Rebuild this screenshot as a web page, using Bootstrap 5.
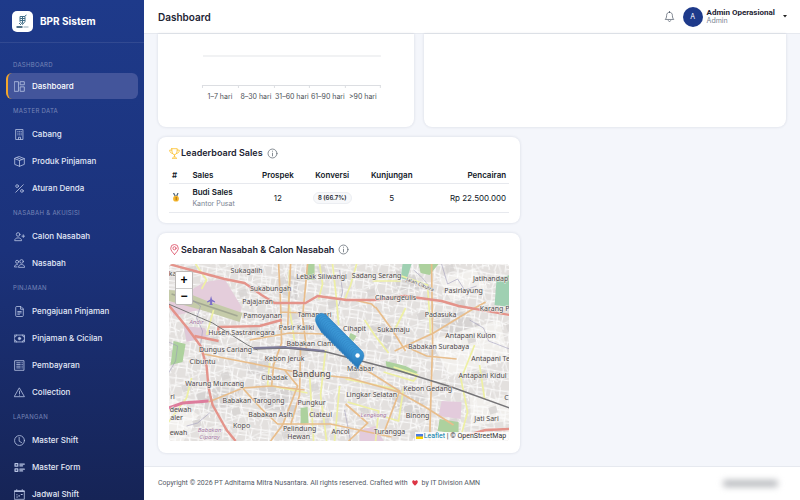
<!DOCTYPE html>
<html lang="id">
<head>
<meta charset="utf-8">
<meta name="viewport" content="width=device-width, initial-scale=1">
<title>Dashboard - BPR Sistem</title>
<link rel="stylesheet" href="https://cdn.jsdelivr.net/npm/bootstrap@5.3.0/dist/css/bootstrap.min.css">
<style>
body{font-family:Inter,"Open Sans",sans-serif;font-size:8px;line-height:12px;background:#f4f6fb;color:#1d2433}
svg{display:block;flex:none}
.ico{width:11px;height:11px;fill:none;stroke:currentColor;stroke-width:1.2;stroke-linecap:round;stroke-linejoin:round}
.sidebar{width:144px;flex:none;background:linear-gradient(180deg,#1e3a8a 0%,#1b327b 50%,#162456 100%)}
.brand{height:43px;padding:0 12px;gap:7px;color:#fff;font-size:10px;font-weight:700;border-bottom:1px solid rgba(255,255,255,.09)}
.brand:hover{color:#fff}
.logo{width:21px;height:21px;border-radius:5px;background:#fff}
.menu{padding:14px 6px 0}
.menu-title{height:21px;padding:6px 7px 0;font-size:6px;line-height:10px;letter-spacing:.3px;color:#7786b7}
.menu-title:first-child{height:16px;padding-top:3px}
.menu .nav-link{height:26px;margin-bottom:1px;padding:0 7px 0 6px;gap:7px;color:#e3e9f7;font-weight:500;border-radius:6px;border-left:2px solid transparent}
.menu .nav-link svg{color:#b6c2e2}
.menu .nav-link.active{background:#43559b;color:#fff;border-left-color:#f4a62a}
.topbar{height:34px;padding:0 13px 0 14px;background:#fff;border-bottom:1px solid #e6e9ef}
.topbar h1{font-size:10px;line-height:14px;font-weight:600;color:#1d2433}
.tool{border:0;background:none;padding:0;color:#4b5563}
.avatar{width:20px;height:20px;border-radius:50%;background:#1e3a8a;color:#fff;font-size:7px}
.user b{font-family:Roboto,Inter,sans-serif;font-weight:700;font-size:8px;line-height:9px;color:#1d2433}
.user small{font-size:7px;line-height:8px;color:#7b8492}
.content{padding:0 14px 13px}
.content .row{--bs-gutter-x:10px;--bs-gutter-y:0}
.panel{background:#fff;border:0;border-radius:8px;box-shadow:0 0 3px rgba(30,41,75,.14);margin-bottom:10px;padding:0 11px}
.panel-top{height:93px;border-radius:0 0 8px 8px}
.chart{display:block;width:100%;height:93px}
.chart text{font-size:7px;fill:#4b4f56;text-anchor:middle}
.panel h2{font-size:9px;line-height:12px;font-weight:600;margin:0;color:#1d2433}
.head{gap:1px}
.head h2{margin-right:3px}
.board{padding-top:10px;padding-bottom:10px}
.board table{table-layout:fixed;color:#111827;margin:8px 0 0;--bs-table-bg:transparent}
.board th,.board td{padding:0 3px;vertical-align:middle;border-color:#e7e9ee}
.board th{height:16px;font-weight:600;line-height:12px}
.board td{height:29px}
.c1{width:6%}.c2{width:18%}.c3{width:16%}.c4{width:16%}.c5{width:19%}.c6{width:25%}
.kantor{font-size:7px;color:#7b8492}
.pill{font-size:6px;line-height:8px;font-weight:600;padding:1px 4px;border:1px solid #eceef2;background:#f7f8fa;color:#22262e}
.spread{padding-top:11px;padding-bottom:12px;margin-bottom:0}
.map{height:177px;margin-top:8px;overflow:hidden;border-radius:4px;background:#e3e0dd}
.map>svg{width:100%;height:100%}
.map .labels{font-family:"Noto Sans",sans-serif;font-size:7px;fill:#4d4a4b;text-anchor:middle;paint-order:stroke;stroke:#f3f0ee;stroke-width:1px;stroke-linejoin:round}
.zoomer{left:6px;top:7px;border:1px solid #bdbab8;border-radius:2px;overflow:hidden}
.zoomer button{width:16px;height:16px;border:0;background:#fff;color:#000;font:bold 12px/14px "Liberation Sans",sans-serif;padding:0}
.zoomer button+button{border-top:1px solid #ccc}
.credit{right:0;bottom:0;gap:1px;background:rgba(255,255,255,.8);padding:0 3px 0 1px;font-family:Roboto,Inter,sans-serif;font-size:7px;line-height:9px;color:#333}
.credit a{color:#0078a8;text-decoration:none}
.footer{padding:0 14px;background:#fff;border-top:1px solid #e6e9ef;font-family:Roboto,Inter,sans-serif;font-size:7px;color:#555b66}
.haze{width:55px;height:7px;border-radius:3px;background:#b9bbbf;filter:blur(3px);margin-right:8px}
</style>
<script src="https://cdn.jsdelivr.net/npm/bootstrap@5.3.0/dist/js/bootstrap.bundle.min.js"></script>
</head>
<body>
<div class="d-flex vh-100 overflow-hidden">
<aside class="sidebar overflow-hidden">
  <a href="#" class="brand d-flex align-items-center text-decoration-none">
    <span class="logo d-flex align-items-center justify-content-center"><svg width="15" height="17" viewBox="0 0 15 17"><g fill="none" stroke="#426f88" stroke-width="1"><path d="M5 3.500h5v5l-2.500 3-2.500-3zM5 5.500h5M5 7.500h5M7.500 3.500v7M10 3l1.500-1M4 10l2 2"/></g><path d="M1.500 14h6" stroke="#17425f" stroke-width="1.500"/><path d="M8.500 14h5" stroke="#8fa8b5"/></svg></span>
    <span>BPR Sistem</span>
  </a>
  <nav class="menu nav flex-column flex-nowrap">
    <div class="menu-title">DASHBOARD</div>
    <a class="nav-link active d-flex align-items-center" href="#"><svg class="ico" viewBox="0 0 16 16"><path d="M1 1h5.500v14H1zM9.500 1H15v4.500H9.500zM9.500 8.500H15V15H9.500z"/></svg>Dashboard</a>
    <div class="menu-title">MASTER DATA</div>
    <a class="nav-link d-flex align-items-center" href="#"><svg class="ico" viewBox="0 0 16 16"><path d="M3 .7h10v14.600H3zM6.500 15v-3h3v3M5.500 3.500h.5M8 3.500h.5M10.300 3.500h.5M5.500 6h.5M8 6h.5M10.300 6h.5M5.500 8.500h.5M8 8.500h.5M10.300 8.500h.5"/></svg>Cabang</a>
    <a class="nav-link d-flex align-items-center" href="#"><svg class="ico" viewBox="0 0 16 16"><path d="M8 1l7 2.800v8.400L8 15l-7-2.800V3.800zM1 3.800l7 2.800 7-2.800M8 6.600V15M4.500 2.400l7 2.800"/></svg>Produk Pinjaman</a>
    <a class="nav-link d-flex align-items-center" href="#"><svg class="ico" viewBox="0 0 16 16"><path d="M13.500 2.500l-11 11"/><circle cx="4.500" cy="4.500" r="2"/><circle cx="11.500" cy="11.500" r="2"/></svg>Aturan Denda</a>
    <div class="menu-title">NASABAH &amp; AKUISISI</div>
    <a class="nav-link d-flex align-items-center" href="#"><svg class="ico" viewBox="0 0 16 16"><circle cx="6" cy="5" r="2.600"/><path d="M1 13.500c0-2 2-3.500 5-3.500s5 1.500 5 3.500zM13.500 5.500v4M11.500 7.500h4"/></svg>Calon Nasabah</a>
    <a class="nav-link d-flex align-items-center" href="#"><svg class="ico" viewBox="0 0 16 16"><circle cx="11" cy="5" r="2.600"/><circle cx="4.500" cy="5.500" r="2.200"/><path d="M6.500 13c0-2 2-3.500 4.500-3.500s4.500 1.500 4.500 3.500zM4.500 13h-4c0-2 1.500-3.500 4.500-3.500"/></svg>Nasabah</a>
    <div class="menu-title">PINJAMAN</div>
    <a class="nav-link d-flex align-items-center" href="#"><svg class="ico" viewBox="0 0 16 16"><path d="M9.500.7H4A1.500 1.500 0 0 0 2.500 2v12A1.500 1.500 0 0 0 4 15.300h8a1.500 1.500 0 0 0 1.500-1.300V4.700zM9.500.7v4h4M5.500 8h5M5.500 10h5M5.500 12h2.500"/></svg>Pengajuan Pinjaman</a>
    <a class="nav-link d-flex align-items-center" href="#"><svg class="ico" viewBox="0 0 16 16"><path d="M.8 3h14.400v10H.8zM.8 6a3 3 0 0 0 3-3M15.200 6a3 3 0 0 1-3-3M.8 10a3 3 0 0 1 3 3M15.200 10a3 3 0 0 0-3 3"/><circle cx="8" cy="8" r="1.700" fill="currentColor"/></svg>Pinjaman &amp; Cicilan</a>
    <a class="nav-link d-flex align-items-center" href="#"><svg class="ico" viewBox="0 0 16 16"><path d="M1.500 1h13v14h-13zM4 4h5M4 6.500h5M4 9h5M4 11.500h5M11.500 4h.7M11.500 6.500h.7M11.500 9h.7M11.500 11.500h.7"/></svg>Pembayaran</a>
    <a class="nav-link d-flex align-items-center" href="#"><svg class="ico" viewBox="0 0 16 16"><path d="M8 1.700l7.200 12.400H.8zM8 6v4M8 12h.01"/></svg>Collection</a>
    <div class="menu-title">LAPANGAN</div>
    <a class="nav-link d-flex align-items-center" href="#"><svg class="ico" viewBox="0 0 16 16"><circle cx="8" cy="8" r="7.200"/><path d="M7.500 3.500V9l3.500 2"/></svg>Master Shift</a>
    <a class="nav-link d-flex align-items-center" href="#"><svg class="ico" viewBox="0 0 16 16"><path stroke-width="1.800" d="M1.500 2.500h4v3.500h-4zM1.500 10h4v3.500h-4zM8.500 3H15M8.500 5.500h4M8.500 10.500H15M8.500 13h4"/></svg>Master Form</a>
    <a class="nav-link d-flex align-items-center" href="#"><svg class="ico" viewBox="0 0 16 16"><path d="M1 2.500h14V15H1zM4 .8v2M12 .8v2"/><path stroke-width="2" d="M1.500 3.500h13"/><path stroke-width="1.500" d="M4 11.500h1M7 10h1M10.500 8h1.500M4 8.500h.5"/></svg>Jadwal Shift</a>
  </nav>
</aside>

<div class="d-flex flex-column flex-grow-1 overflow-hidden">
  <header class="topbar d-flex align-items-center justify-content-between flex-shrink-0">
    <h1 class="mb-0">Dashboard</h1>
    <div class="d-flex align-items-center">
      <button class="tool me-2" type="button" aria-label="Notifikasi"><svg class="ico" viewBox="0 0 16 16"><path stroke-width="1" d="M8 1.800C5 1.800 3.800 4 3.800 6.500c0 3.500-1.300 5-2 5.800h12.400c-.7-.8-2-2.300-2-5.800 0-2.500-1.200-4.700-4.200-4.700zM8 .7v1M6.200 14a1.900 1.900 0 0 0 3.600 0"/></svg></button>
      <button class="tool user d-flex align-items-center text-start" type="button">
        <span class="avatar d-flex align-items-center justify-content-center me-1">A</span>
        <span class="d-flex flex-column me-2"><b>Admin Operasional</b><small>Admin</small></span>
        <svg width="4" height="3" viewBox="0 0 4 3"><path d="M0 0h4L2 2.500z" fill="#222"/></svg>
      </button>
    </div>
  </header>

  <main class="content flex-shrink-0">
    <div class="row">
      <div class="col-5"><section class="panel panel-top">
        <svg class="chart" viewBox="169 34 234 93"><path d="M203 56h178" stroke="#e4e5e8"/><path d="M202 85.500h179M202.500 85v3M238.500 85v3M274.500 85v3M309.500 85v3M345.500 85v3M380.500 85v3" stroke="#dcdee2" fill="none"/><text x="220" y="99">1–7 hari</text><text x="256" y="99">8–30 hari</text><text x="292" y="99">31–60 hari</text><text x="328" y="99">61–90 hari</text><text x="363" y="99">&gt;90 hari</text></svg>
      </section></div>
      <div class="col-7"><section class="panel panel-top"></section></div>
    </div>
    <div class="row"><div class="col-7">
      <section class="panel board">
        <div class="head d-flex align-items-center">
          <svg class="ico" viewBox="0 0 16 16" style="color:#fbc02d"><path d="M4 1h8c0 5-1 8.500-4 9-3-.5-4-4-4-9zM4 3H1c0 3 1.500 4.500 4 5M12 3h3c0 3-1.500 4.500-4 5M8 10v3M5 15c0-1.500 1.500-2 3-2s3 .5 3 2z"/></svg>
          <h2>Leaderboard Sales</h2>
          <svg class="ico text-secondary" viewBox="0 0 16 16"><circle cx="8" cy="8" r="6.500"/><path d="M8 7.500v4M8 4.500v.3"/></svg>
        </div>
        <table class="table w-100">
          <thead><tr><th class="c1">#</th><th class="c2">Sales</th><th class="c3 text-center">Prospek</th><th class="c4 text-center">Konversi</th><th class="c5 text-center">Kunjungan</th><th class="c6 text-end">Pencairan</th></tr></thead>
          <tbody><tr>
            <td><svg width="8" height="9" viewBox="0 0 8 9"><path d="M1.500 0l2 3.500M6 0L4.500 3.500" stroke="#52687f" stroke-width="1.300"/><circle cx="4" cy="5.700" r="2.900" fill="#f4b52e"/><path d="M4.200 4v3.300" stroke="#a96d0a"/></svg></td>
            <td class="text-nowrap"><span class="d-block fw-semibold">Budi Sales</span><span class="kantor d-block">Kantor Pusat</span></td>
            <td class="text-center">12</td>
            <td class="text-center"><span class="pill rounded-pill d-inline-block">8 (66.7%)</span></td>
            <td class="text-center">5</td>
            <td class="text-end">Rp 22.500.000</td>
          </tr></tbody>
        </table>
      </section>

      <section class="panel spread">
        <div class="head d-flex align-items-center">
          <svg class="ico" viewBox="0 0 16 16" style="color:#dc4c64"><path d="M8 15.200C5 12 2.500 9 2.500 6.200a5.500 5.500 0 0 1 11 0C13.500 9 11 12 8 15.200z"/><circle cx="8" cy="6.200" r="2.300"/></svg>
          <h2>Sebaran Nasabah &amp; Calon Nasabah</h2>
          <svg class="ico text-secondary" viewBox="0 0 16 16"><circle cx="8" cy="8" r="6.500"/><path d="M8 7.500v4M8 4.500v.3"/></svg>
        </div>
        <div class="map position-relative">
          <svg viewBox="169 264 341 177" preserveAspectRatio="xMidYMid slice">
            <defs>
              <pattern id="streets" width="23" height="19" patternUnits="userSpaceOnUse" patternTransform="rotate(9)"><path d="M0 4l12-1 11 1M3 0l1 10-2 9M12 3l1 16M0 12l13-1 10 3M18 4l-1 9M18 13l2 6M4 8h8M13 16l6-1" fill="none" stroke="#fff" stroke-width=".9"/></pattern>
              <pattern id="streets2" width="41" height="37" patternUnits="userSpaceOnUse" patternTransform="rotate(-17)"><path d="M0 9l18 4 23-4M11 0l-3 20 6 17M30 0l1 37M0 27l22-2 19 2" fill="none" stroke="#fafafa" stroke-width="1"/><path d="M20 15h8v7h-8z" fill="#d6d3d2"/></pattern>
              <linearGradient id="blue" x1="0" y1="0" x2="0" y2="1"><stop offset="0" stop-color="#3d9ad8"/><stop offset="1" stop-color="#2474b5"/></linearGradient>
              <g id="pin"><path d="M0 0c-1-3.500-6.200-8.500-6.200-13.500a6.300 6.300 0 0 1 12.600 0C6.400-8.500 1-3.500 0 0z" fill="url(#blue)" stroke="#2b7cbd" stroke-width=".4"/></g>
            </defs>
            <path fill="#e3e0de" d="M0 0h900v900H0z"/>
            <g fill="#d6d3d2"><path d="M256 385l35 3 8 24-34-3zM289 275l12 3-4 22-14-6zM430 322l30-12 22 16-28 14zM195 395l22-8 24 2-8 16-24 9zM370 325l30 10-14 15zM395 270l20 5 8 14-28 2zM390 385l36 12-6 18-30-7zM245 357l30 2-4 18-24-3z"/></g>
            <g fill="#f1efec"><path d="M430 340l70-20 10 40-60 15zM470 395l40 6v20l-38 5zM440 280l35-12 12 20-36 12zM169 395l30 20-15 26h-15z"/></g>
            <path fill="url(#streets)" d="M0 0h900v900H0z"/><path fill="url(#streets2)" opacity=".8" d="M0 0h900v900H0z"/>
            <path fill="#e4cddb" d="M205 282l20-3 17 28-2 10-32-9-34 8-5-13z"/><path fill="#c5cba9" d="M169 290l14 1 22 9 38 13-3 9-38-12-33-9z"/><path d="M172 294l66 22" stroke="#a2a792" stroke-width="1.500"/><path fill="#dec9d8" d="M184 326l21 2 5 8-23 6z"/>
            <path fill="#9fd0b2" d="M497 279l13-4v32l-15-2zM403 264h9l-5 16-6-2z"/><path fill="#add19e" d="M419 264h20l-9 11-9-2zM440 419l19 3v12l-21-3zM301 408l7-1 1 16-8 1zM386 361l20 5 12 6-3 4-28-8zM308 264h7v16h-8zM174 341l12 3-3 18-12 3zM351 333l6 3-3 5-5-3z"/>
            <path fill="#e3cbdc" d="M442 401l20 1-1 17-22-3zM360 430l16-4 8 15h-24z"/>
            <g fill="none" stroke="#9b97b8" stroke-width=".9" opacity=".6"><path d="M185 294l16 12-4 12 6 13-3 20M169 342l9 4-2 15-7 12M414 270l9 8 7 9-2 13M442 264l6 20 10-5 7 11 12-4M470 320l14 8 5 13 21 8M340 270l3 22-4 14M345 410l6 31M210 413l-12 10-11 3"/></g>
            <g fill="none" stroke="#eef0a4" stroke-width="1.700"><path d="M196 264l11 16-5 9M320 264l3 20-4 15M333 264l4 36 2 25M357 264l-6 21-6 15M402 276l26 9 2 30 1 20M373 281l28 0M169 422l18-24 5-20M290 270l-1 33 6 38M270 363l-2 22 40 8M310 375l4 66M326 350l-5 45 6 46M340 386l-5 55M365 320l10 15 14 18M394 367l24 8-4 6-30-9M404 388l-5 33-20-6M346 379l50 10M461 377l7 35-8 29M348 402l31 9-3 30M395 330l11-22M475 345l-12 30M214 310l-7 25M480 365l5 34"/></g>
            <g fill="none" stroke="#e8bd8b" stroke-width="1.700"><path d="M279 264l2 39 1 40-8 22-2 22M291 264l-3 65M308 264l-5 53 4 33M204 354l36 7 61 12 49 5 49 14 25 14 30 19M209 402l34-14 29-2 33 4M243 388l18 20 17 16 53 0 61 13M285 370l13 16-15 39-12 16M301 345l-1 50-9 30M376 307l16 22 14 22M395 351l39-18 36-22 16-9M432 264l1 80-3 97M339 344l26 25 35 22-15 40M346 404l22 19-19 18M405 346l22 10 30 3M355 300l17 4 4 4M282 312l25 1M250 340l40-7 36 1"/></g>
            <g fill="none" stroke="#e4938a" stroke-width="2.400" stroke-linejoin="round"><path d="M169 264l26 7 30 8 20 4 17 12 13 8 31 0 12-7 29 4 28 0 30-4 37 5 17 5 51 9M169 305l18 22 14 19 6 20 2 22 4 17 14 25 9 11M218 334l1-7 41-1 22-6M461 437l25-7 24-1M195 336l24 5"/></g>
            <path d="M169 408l14-5 26-2" fill="none" stroke="#dd7c9c" stroke-width="3"/>
            <path d="M169 304l44 19 35 22 10 5" fill="none" stroke="#777" stroke-width="1"/><path d="M254 349l32-1 41 4 31 8 42 11 52 16 58 21" fill="none" stroke="#757477" stroke-width="1.400"/><path d="M254 348l32-1 39 4" fill="none" stroke="#7d7b99" stroke-width="1.800"/>
            <path d="M211.500 296l1 3.500 3 2v1l-3-1v2.500l1 1h-4l1-1V301.500l-3 1v-1l3-2z" fill="#7e70c9"/>
            <g class="labels">
              <text x="247" y="273">Sukagalih</text><text x="322" y="279">Lebak Siliwangi</text><text x="377" y="278">Sadang Serang</text><text x="491" y="281">Jatihandap</text><text x="271" y="291">Sukabungah</text><text x="464" y="293">Pasirlayung</text><text x="396" y="300">Cihaurgeulis</text><text x="258" y="304">Pajajaran</text><text x="495" y="311">Karang P</text><text x="441" y="317">Padasuka</text><text x="263" y="318">Pamoyanan</text><text x="315" y="317">Tamansari</text><text x="297" y="330">Pasir Kaliki</text><text x="355" y="331">Cihapit</text><text x="394" y="332">Sukamaju</text><text x="471" y="338">Antapani Kulon</text><text x="242" y="335">Husen Sastranegara</text><text x="313" y="346">Babakan Ciamis</text><text x="439" y="349">Babakan Surabaya</text><text x="226" y="352">Dungus Cariang</text><text x="203" y="364">Cibuntu</text><text x="285" y="361">Kebon Jeruk</text><text x="491" y="361">Antapani Te</text><text x="361" y="371">Malabar</text><text x="483" y="378">Antapani Kidul</text><text x="275" y="380">Cibadak</text><text x="215" y="386">Warung Muncang</text><text x="428" y="391">Kebon Gedang</text><text x="372" y="397">Lingkar Selatan</text><text x="254" y="403">Babakan Tarogong</text><text x="312" y="405">Pungkur</text><text x="271" y="417">Babakan Asih</text><text x="321" y="417">Ciateul</text><text x="418" y="418">Binong</text><text x="487" y="421">Jati Sari</text><text x="242" y="428">Kopo</text><text x="300" y="431">Pelindung</text><text x="299" y="439">Hewan</text><text x="390" y="434">Turangga</text><text x="341" y="434">Ancol</text><text x="181" y="412">dewah</text><text x="177" y="420">aler</text><text x="179" y="435">ewah</text><text x="173" y="399">ri</text><text x="173" y="276">ka</text><text x="507" y="400">C</text>
              <g font-size="6" font-style="italic" fill="#a479a5"><text x="210" y="432">Babakan</text><text x="210" y="439">Ciparay</text><text x="374" y="417">Lengkong</text><text x="197" y="324">Andir</text></g>
              <text x="312" y="377" font-size="9">Bandung</text><text x="420" y="286" font-size="5" transform="rotate(22 420 286)">Jalan Cikutra</text>
            </g>
            <g id="pins"></g>
          </svg>
          <div class="zoomer position-absolute d-flex flex-column"><button type="button" aria-label="Perbesar">+</button><button type="button" aria-label="Perkecil">−</button></div>
          <div class="credit position-absolute d-flex align-items-center"><svg width="7" height="5" viewBox="0 0 7 5"><path fill="#4c7be1" d="M0 0h7v3H0z"/><path fill="#ffd500" d="M0 2.500h7V5H0z"/></svg><span><a href="#">Leaflet</a> | © OpenStreetMap</span></div>
        </div>
      </section>
    </div></div>
  </main>

  <footer class="footer d-flex align-items-center justify-content-between flex-grow-1">
    <span class="d-flex align-items-center">Copyright © 2026 PT Adhitama Mitra Nusantara. All rights reserved. Crafted with<svg class="mx-1" width="6" height="6" viewBox="0 0 12 12"><path fill="#dc3545" d="M6 11.500C-2 6 0 .5 3.200.5 4.700.5 6 2.200 6 2.200S7.300.5 8.800.5C12 .5 14 6 6 11.500z"/></svg>by IT Division AMN</span>
    <span class="haze"></span>
  </footer>
</div>
</div>
<script>
const pins = document.getElementById('pins');
const count = 22;
for (let i = 0; i <= count; i++) {
  const pin = document.createElementNS('http://www.w3.org/2000/svg', 'use');
  pin.setAttribute('href', '#pin');
  pin.setAttribute('x', 322 + i * 36 / count);
  pin.setAttribute('y', 333 + i * 36 / count);
  pins.append(pin);
}
const dot = document.createElementNS('http://www.w3.org/2000/svg', 'circle');
dot.setAttribute('cx', 358); dot.setAttribute('cy', 355.5); dot.setAttribute('r', 2.2); dot.setAttribute('fill', '#fff');
pins.append(dot);
</script>
</body>
</html>
